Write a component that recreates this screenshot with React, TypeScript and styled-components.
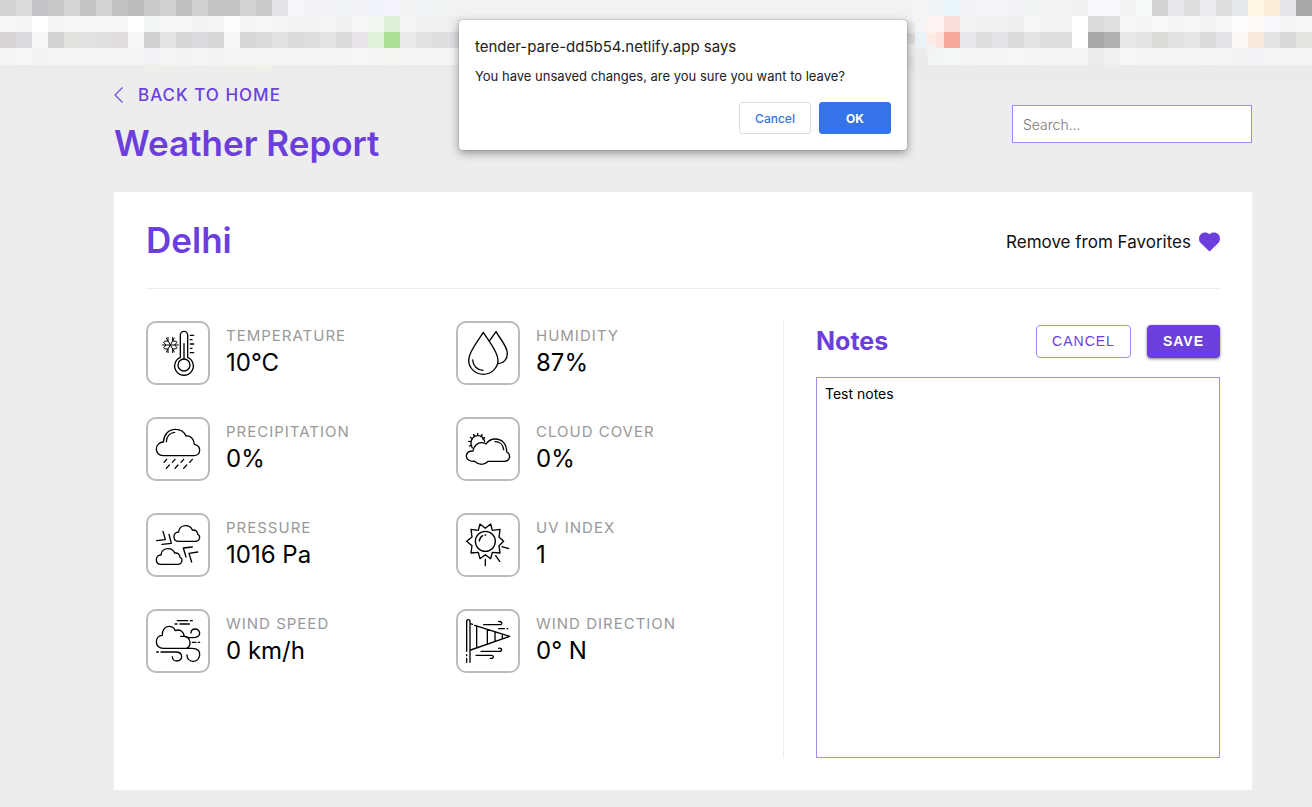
import React from "react";
import styled, { createGlobalStyle } from "styled-components";

const purple = "#6c3fdd";
const lilac = "#a68aee";

const GlobalStyle = createGlobalStyle`
  *, *::before, *::after { box-sizing: border-box; }
  body { margin: 0; background: #ededed; color: #000; font-family: Inter, "Open Sans", sans-serif; }
  h1, h2, h3, p, dl, dd { margin: 0; }
  button, input, textarea { font: inherit; }
`;

const Page = styled.div`
  position: relative;
  min-height: 100vh;
  display: flex;
  flex-direction: column;
`;
const Strip = styled.svg`
  display: block;
  width: 100%;
  height: 80px;
  flex: none;
`;
const Main = styled.main`
  flex: 1;
  display: flex;
  flex-direction: column;
  padding: 0 60px 17px 114px;
`;
const TopBar = styled.header`
  display: flex;
  justify-content: space-between;
  align-items: flex-start;
  height: 112px;
`;
const BackLink = styled.a`
  display: flex;
  align-items: center;
  gap: 14px;
  height: 30px;
  color: ${purple};
  font-size: 17px;
  font-weight: 500;
  letter-spacing: 1px;
  text-decoration: none;
`;
const Title = styled.h1`
  color: ${purple};
  font-size: 35px;
  line-height: 40px;
  font-weight: 600;
  margin-top: 13px;
`;
const Search = styled.input`
  width: 240px;
  height: 38px;
  margin-top: 25px;
  padding: 0 10px;
  border: 1px solid ${lilac};
  border-radius: 0;
  background: #fff;
  font-size: 14px;
  font-weight: 300;
  outline: none;
  &::placeholder { color: #777; opacity: 1; }
`;
const Card = styled.section`
  flex: 1;
  display: flex;
  flex-direction: column;
  background: #fff;
  padding: 0 32px 32px;
`;
const CardHead = styled.div`
  display: flex;
  justify-content: space-between;
  align-items: center;
  height: 97px;
  border-bottom: 1px solid #ededed;
`;
const City = styled.h2`
  color: ${purple};
  font-size: 35px;
  line-height: 40px;
  font-weight: 600;
`;
const Favorite = styled.button`
  display: flex;
  align-items: center;
  gap: 8px;
  padding: 4px 0 0;
  border: 0;
  background: none;
  font-size: 17px;
  color: #111;
`;
const Body = styled.div`
  flex: 1;
  display: grid;
  grid-template-columns: 637fr 437fr;
  padding-top: 32px;
`;
const Metrics = styled.dl`
  display: grid;
  grid-template-columns: 310px 1fr;
  grid-auto-rows: 64px;
  row-gap: 32px;
`;
const Metric = styled.div`
  display: flex;
  gap: 16px;
`;
const Tile = styled.span`
  width: 64px;
  height: 64px;
  border: 2px solid #bbb;
  border-radius: 10px;
  flex: none;
  svg { display: block; width: 60px; height: 60px; fill: none; stroke: #000; stroke-width: 4; stroke-linecap: round; stroke-linejoin: round; }
`;
const Label = styled.dt`
  color: #999;
  font-size: 15px;
  line-height: 18px;
  letter-spacing: 1px;
  margin-top: 6px;
`;
const Value = styled.dd`
  font-size: 24px;
  line-height: 36px;
`;
const NotesPanel = styled.section`
  display: flex;
  flex-direction: column;
  border-left: 1px solid #ededed;
  padding-left: 32px;
`;
const NotesHead = styled.div`
  display: flex;
  align-items: center;
  gap: 16px;
  height: 40px;
  margin-bottom: 16px;
`;
const NotesTitle = styled.h3`
  flex: 1;
  color: ${purple};
  font-size: 25px;
  font-weight: 700;
`;
const Action = styled.button<{ $solid?: boolean }>`
  height: 33px;
  padding: 0 15px;
  border: 1px solid ${(p) => (p.$solid ? purple : lilac)};
  border-radius: 4px;
  background: ${(p) => (p.$solid ? purple : "#fff")};
  color: ${(p) => (p.$solid ? "#fff" : purple)};
  box-shadow: ${(p) => (p.$solid ? "0 1px 3px rgba(0,0,0,.5)" : "none")};
  font-family: "Liberation Sans", Arial, sans-serif;
  font-size: 14px;
  font-weight: ${(p) => (p.$solid ? 700 : 400)};
  letter-spacing: 1px;
`;
const Notes = styled.textarea`
  flex: 1;
  width: 100%;
  padding: 7px 8px;
  border: 1px solid ${lilac};
  border-radius: 0;
  outline: none;
  resize: none;
  font-size: 14px;
  line-height: 17px;
`;
const Dialog = styled.div`
  position: absolute;
  top: 20px;
  left: calc(50% + 27px);
  transform: translateX(-50%);
  width: 448px;
  padding: 16px;
  border-radius: 3px;
  background: #fff;
  box-shadow: 0 0 1px rgba(0,0,0,.6), 0 3px 10px rgba(0,0,0,.4);
  color: #202124;
`;
const DialogTitle = styled.h2`
  font-size: 15px;
  line-height: 22px;
  font-weight: 400;
`;
const DialogText = styled.p`
  margin-top: 9px;
  font-size: 13px;
  line-height: 18px;
`;
const DialogActions = styled.div`
  display: flex;
  justify-content: flex-end;
  gap: 8px;
  margin-top: 17px;
`;
const DialogButton = styled.button<{ $primary?: boolean }>`
  width: 72px;
  height: 32px;
  border: 1px solid ${(p) => (p.$primary ? "#3574e8" : "#dadce0")};
  border-radius: 3px;
  background: ${(p) => (p.$primary ? "#3574e8" : "#fff")};
  color: ${(p) => (p.$primary ? "#fff" : "#3574e8")};
  font-size: 12px;
  font-weight: ${(p) => (p.$primary ? 700 : 500)};
`;

/* Blurred browser chrome: rows of 16px colour blocks. */
type Run = { y: number; h: number; x: number; colors: string };
const runs: Run[] = [
  { y: 0, h: 16, x: 0, colors: "d1d3d5 dcdcdc c2c3c9 c7c8ca d2d4d5 c2c3c5 d2d3d5 c1c1c1 bcbcbc cacacd d0d0d0 c0c0c0 d0d0d0 c3c4c6 c3c4c6 d2d3d5 cacacc e2e3e6 f6f7fb f2f3f7 f2f3f7 eff4f6 f1f3f7 eff2f8 f5f4fc f1f3f5 eff3f6 f1f4f5" },
  { y: 16, h: 16, x: 0, colors: "f6f6f6 f5f5f5 ffffff f3f6f4 f6f6f6 f8f8f8 f8f8f8 f8f8f8 ffffff f1f5f3 f8f8f8 f8f8f8 f3f3f3 f5f5f5 fdfdfd f4f4f4 f7f7f7 f5f5f5 f2f2f2 f2f2f2 f4f4f4 f0f0f0 f6f6f9 f2f8f0 dff0d7 f4f4f4 f1f1f1 f0f0f0 eeeeee" },
  { y: 32, h: 16, x: 0, colors: "d8d1d6 dddbdf f8f8f8 d3d3d3 e1e1de e3e0e2 e2dfe1 e0dcde f8f8f8 d0d0d0 e5e4e2 dad7da dadbde d9d7d9 f7f7f7 d8d8d8 dcdcdc e3e1e3 dddbdc dfdcde e4e2e3 dddcda e9e4ea e2f3dc ade296 e9eaea e2e0e1 dfdddf e0dee2" },
  { y: 48, h: 17, x: 0, colors: "f4f4f4 f6f6f6 f3f3f3 f4f4f4 f4f4f4 f2f5f3 f4f4f4 f4f4f4 f4f4f4 f2f2f6 f4f4f4 f3f3f3 f4f4f4 f3f3f3 f4f4f4 f4f4f4 f4f4f4 f2f5f3 f4f4f4 f4f4f4 f4f4f4 f5f5f5 f6f6f6 f5f5f5 f2f5f0 f5f5f5 f5f5f5 f5f5f5 f5f5f5" },
  { y: 65, h: 7, x: 144, colors: "eff1e8 eeefeb ededed ededed ededed eeefeb eeefeb eff1e8" },
  { y: 0, h: 16, x: 912, colors: "f3f4f6 eff4f6 eaf5f9 f1f2f5 f3f4f7 f3f4f7 f2f3f6 eff4f5 f1f3f4 f1f3f4 eff1f3 f8f9fc f8f9fc f1f3f5 f5fafb d1d3d4 e7e8eb dcdddf ebecef dbdedb e5eaee fff6e4 fbedd6 e6e7eb a9a9a9" },
  { y: 16, h: 16, x: 912, colors: "f5f5f7 fef3f1 fae0db f1f3f2 f0f0f0 f1f1f1 efefef f6f6f6 f3f3f3 f3f3f3 ffffff dbdbdb dfdfdf f8f8f8 f4f4f4 fafafa f5f5f5 f6f6f6 f3f3f3 f5f8f6 fefefc fffaf6 f8fafd f5f5f5 f7f7f7" },
  { y: 32, h: 16, x: 912, colors: "e9f2f6 ffe3de f8a89b e7e8eb e0dddf e4e2e6 dcdcdf e5e3e4 e0dddf e0dde0 ffffff a8a8a8 b0b0b0 e9e7e8 e4e2e3 dcdbd8 e3e1e2 e7e7e7 dddada e3e4e7 fef9f5 f9eadf e4e4e4 dbdadb e4e3e0" },
  { y: 48, h: 17, x: 912, colors: "ebebeb f1f6f6 f2f9f8 f4f4f4 f5f5f5 f5f5f5 f7f7f7 f5f5f5 f4f4f4 f4f4f4 f4f4f4 ededed f0f0f0 f6f6f6 f4f4f4 f4f4f4 f2f5f3 f4f4f4 f5f5f5 f4f4f4 f1f3f1 f2f2f6 f4f4f4 f4f4f4 f4f4f4" },
];

const ChromeStrip = () => (
  <Strip viewBox="0 0 1312 80" preserveAspectRatio="none" shapeRendering="crispEdges" aria-hidden="true">
    <rect width="1312" height="20" fill="#f1f2f4" />
    <rect y="65" width="458" height="7" fill="#ebebeb" />
    <rect x="905" y="65" width="407" height="15" fill="#ebebeb" />
    {runs.map((run) =>
      run.colors.split(" ").map((c, i) => (
        <rect key={`${run.x}-${run.y}-${i}`} x={run.x + i * 16} y={run.y} width={16} height={run.h} fill={`#${c}`} />
      ))
    )}
    <rect x="905" y="22" width="10" height="11" fill="#ebebeb" />
    <rect x="905" y="33" width="10" height="11" fill="#dcdcdc" />
    <rect x="905" y="44" width="10" height="11" fill="#ebebeb" />
    <rect x="905" y="55" width="10" height="15" fill="#e5e5e5" />
    <rect x="926" y="22" width="10" height="11" fill="#fdf3f0" />
    <rect x="926" y="33" width="10" height="11" fill="#fdebe6" />
    <rect x="926" y="44" width="10" height="11" fill="#f3f1f1" />
  </Strip>
);

const icons = {
  thermometer: (
    <svg viewBox="24 39 180 180">
      <path d="M121 142V75a11 11 0 0 1 22 0v67a28 28 0 1 1-22 0Z" />
      <circle cx="132" cy="165" r="18" />
      <path d="M132 101v45M151 76h10M151 89h5M151 102h10M151 115h5M151 128h10" />
      <path strokeWidth="3" d="M67 105h48M79 84l24 42M103 84l-24 42M71 97l7 8-7 8M111 97l-7 8 7 8M84 82v11l-11 1M98 82v11l11 1M84 128v-11l-11-1M98 128v-11l11-1" />
    </svg>
  ),
  drops: (
    <svg viewBox="24 39 180 180">
      <path d="M100 67C86 90 56 124 56 150a44 43 0 0 0 88 0C144 124 114 90 100 67Z" />
      <path d="M119 92l19-27c12 21 34 44 34 65 0 18-11 30-27 31M68 150c1 17 13 30 31 31" />
    </svg>
  ),
  rain: (
    <svg viewBox="24 327 180 180">
      <path d="M69 437c-12 0-20-9-20-20s9-21 21-21c2-23 16-38 36-38 14 0 27 8 32 20 14-2 24 9 25 25 9 2 16 8 16 17 0 10-7 17-17 17Z" />
      <path d="M79 395c1-16 11-27 25-28M80 448l-8 9M105 448l-8 9M131 448l-8 9M157 448l-8 9M88 465l-9 10M114 465l-9 10M140 465l-9 10" />
    </svg>
  ),
  cloudSun: (
    <svg viewBox="24 327 180 180">
      <path d="M72 454c-13 1-23-6-23-16s8-15 20-15c2-15 13-25 26-25 5 0 9 1 13 4 6-9 15-15 28-15 20 0 34 14 34 39 7 3 9 8 9 14-1 9-7 14-16 14h-48c-6 6-13 9-20 9-10 0-16-4-23-10M135 395c15 0 25 10 26 24" />
      <path d="M67 414c-10-18 0-37 17-37 10 0 17 6 20 17M83 370v7M71 374l3 6M61 382l6 5M56 394l8 1M58 408l7-3M96 374l-3 6M104 383l-6 4" />
    </svg>
  ),
  pressure: (
    <svg viewBox="24 30 180 180" strokeWidth="5">
      <path d="M116 109c-9 0-14-6-14-14s6-14 14-14c1-12 10-19 21-19 10 0 17 5 20 13 10-1 16 5 16 13 4 1 6 3 6 8 0 8-6 13-13 13ZM63 178c-9 0-14-6-14-14s6-14 14-14c1-12 10-19 21-19 10 0 17 5 20 13 10-1 16 5 16 13 4 1 6 3 6 8 0 8-6 13-13 13Z" />
      <path d="M69 79l7 25-26 3M87 88l7 27-28 3M157 126l-27 3 8 27M173 141l-26 4 8 26" />
    </svg>
  ),
  sun: (
    <svg viewBox="24 30 180 180">
      <circle cx="106" cy="109" r="30" />
      <path d="M106 70l16-13 5 19 23-3-3 23 14 13-14 13 3 22-23-2-5 19-16-12-16 12-5-19-22 2 3-22-16-13 16-13-3-23 22 3 5-19ZM88 108c1-9 5-13 10-16M105 90h2M106 163v19M137 152l12 17M156 125l20 6" />
    </svg>
  ),
  wind: (
    <svg viewBox="24 318 180 180">
      <path d="M156 430H70c-13 0-21-9-21-19s6-20 18-20c-1-16 8-27 20-27 10 0 16 5 19 13 14-6 25 3 27 17 9 2 16 9 17 17 1 10-4 16-10 19h16c18 0 24 9 23 20-2 12-9 19-20 19-12 0-18-9-18-19M122 394h12c7 0 10 4 12 4h12c15 0 22-7 21-14-2-8-6-12-13-12-8 0-13 5-13 12M50 441h5M63 441h44c12 0 18 6 18 14 0 7-7 13-14 13-8 0-14-6-14-13M112 347h31M151 347h6M105 357h6M120 357h28M157 412h11M175 412h4" />
    </svg>
  ),
  windsock: (
    <svg viewBox="24 318 180 180">
      <path d="M50 439v-89c0-8 10-8 10 0v122M50 449v3M50 460v12M61 356l7 2M74 361l105 33-117 41M80 364v63M112 374v41M135 382v25M157 389v11M101 359h49c9 0 6-12-4-9M146 371h17M171 371h2M93 439h56c9 0 7-12-3-9M78 451h46c9 0 8 11-3 9" />
    </svg>
  ),
};

const metrics: { label: string; value: string; icon: keyof typeof icons }[] = [
  { label: "TEMPERATURE", value: "10°C", icon: "thermometer" },
  { label: "HUMIDITY", value: "87%", icon: "drops" },
  { label: "PRECIPITATION", value: "0%", icon: "rain" },
  { label: "CLOUD COVER", value: "0%", icon: "cloudSun" },
  { label: "PRESSURE", value: "1016 Pa", icon: "pressure" },
  { label: "UV INDEX", value: "1", icon: "sun" },
  { label: "WIND SPEED", value: "0 km/h", icon: "wind" },
  { label: "WIND DIRECTION", value: "0° N", icon: "windsock" },
];

export default function App() {
  return (
    <Page>
      <GlobalStyle />
      <ChromeStrip />
      <Main>
        <TopBar>
          <div>
            <BackLink href="#home">
              <svg width="10" height="16" viewBox="0 0 10 16" fill="none" stroke="currentColor" strokeWidth="1.1">
                <path d="M8.500 .5L1 8l7.500 7.500" />
              </svg>
              BACK TO HOME
            </BackLink>
            <Title>Weather Report</Title>
          </div>
          <Search type="search" placeholder="Search..." aria-label="Search" />
        </TopBar>
        <Card>
          <CardHead>
            <City>Delhi</City>
            <Favorite type="button">
              Remove from Favorites
              <svg width="21" height="20" viewBox="0 0 21 20" fill={purple} aria-hidden="true">
                <path d="M10.500 19.500L1.700 11C-.6 8.700-.5 4.500 1.700 2.200 4-.2 8.200-.2 10.500 2.300 12.800-.2 17-.2 19.300 2.200c2.200 2.300 2.300 6.500 0 8.800Z" />
              </svg>
            </Favorite>
          </CardHead>
          <Body>
            <Metrics>
              {metrics.map((m) => (
                <Metric key={m.label}>
                  <Tile aria-hidden="true">{icons[m.icon]}</Tile>
                  <div>
                    <Label>{m.label}</Label>
                    <Value>{m.value}</Value>
                  </div>
                </Metric>
              ))}
            </Metrics>
            <NotesPanel>
              <NotesHead>
                <NotesTitle id="notes-title">Notes</NotesTitle>
                <Action type="button">CANCEL</Action>
                <Action type="button" $solid>SAVE</Action>
              </NotesHead>
              <Notes aria-labelledby="notes-title" defaultValue="Test notes" />
            </NotesPanel>
          </Body>
        </Card>
      </Main>
      <Dialog role="alertdialog" aria-labelledby="dialog-title" aria-describedby="dialog-text">
        <DialogTitle id="dialog-title">tender-pare-dd5b54.netlify.app says</DialogTitle>
        <DialogText id="dialog-text">You have unsaved changes, are you sure you want to leave?</DialogText>
        <DialogActions>
          <DialogButton type="button">Cancel</DialogButton>
          <DialogButton type="button" $primary>OK</DialogButton>
        </DialogActions>
      </Dialog>
    </Page>
  );
}
